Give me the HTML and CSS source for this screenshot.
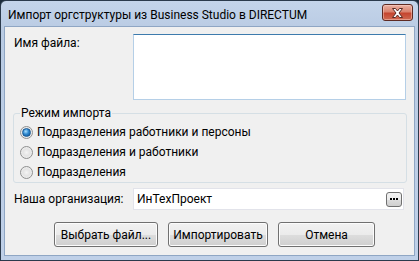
FILE: index.html
```html
<!DOCTYPE html>
<html lang="ru">
<head>
<meta charset="utf-8">
<title>Импорт оргструктуры</title>
<link rel="stylesheet" href="styles.css">
</head>
<body>
<div class="window">
  <div class="titlebar">
    <span class="title">Импорт оргструктуры из Business Studio в DIRECTUM</span>
    <div class="close">
      <svg width="13" height="10" viewBox="0 0 13 10"><path d="M1.5 0.5 H4.5 L6.5 3 L8.5 0.5 H11.5 L8 5 L11.5 9.5 H8.5 L6.5 7 L4.5 9.5 H1.5 L5 5 Z" fill="#fff" stroke="#5b2b25" stroke-width="1" stroke-linejoin="round"/></svg>
    </div>
  </div>
  <div class="client">
    <div class="file-row">
      <span class="label">Имя файла:</span>
      <div class="textarea"></div>
    </div>
    <fieldset class="group">
      <legend>Режим импорта</legend>
      <div class="radio"><span class="circle checked"></span><span>Подразделения работники и персоны</span></div>
      <div class="radio"><span class="circle"></span><span>Подразделения и работники</span></div>
      <div class="radio"><span class="circle"></span><span>Подразделения</span></div>
    </fieldset>
    <div class="org-row">
      <span class="label">Наша организация:</span>
      <div class="input">
        <span class="value">ИнТехПроект</span>
        <span class="dots"><i></i><i></i><i></i></span>
      </div>
    </div>
    <div class="buttons">
      <div class="btn btn-choose">Выбрать файл...</div>
      <div class="btn btn-import">Импортировать</div>
      <div class="btn btn-cancel">Отмена</div>
    </div>
  </div>
</div>
</body>
</html>
```

FILE: styles.css
```css
* { box-sizing: border-box; }
html, body { margin: 0; padding: 0; }
body {
  width: 419px;
  height: 261px;
  overflow: hidden;
  font-family: Roboto, "Noto Sans", sans-serif;
  font-size: 12px;
  color: #000;
  background: #1c2c3c;
}
.window {
  width: 419px;
  height: 261px;
  border: 1px solid #2b3a4c;
  border-radius: 6px 6px 0 0;
  background: linear-gradient(#c4d4ea, #b9cbe3 30px, #bfd0e8);
  display: flex;
  flex-direction: column;
  padding: 0 3px 4px 3px;
}
.titlebar {
  height: 25px;
  display: flex;
  align-items: flex-start;
  justify-content: space-between;
  padding-left: 4px;
}
.title {
  margin-top: 7px;
  font-size: 12px;
  line-height: 15px;
  color: #000;
  white-space: nowrap;
}
.close {
  width: 31px;
  height: 17px;
  margin-top: 3px;
  margin-right: 2px;
  border: 1px solid #5e2a22;
  border-radius: 3px;
  background: linear-gradient(#eab1a3, #d9826e 45%, #c5452f 55%, #cf6a52);
  display: flex;
  align-items: center;
  justify-content: center;
  box-shadow: inset 0 0 0 1px rgba(255,220,210,0.45);
}
.close svg { display: block; }
.client {
  flex: 1;
  background: #f0f0f0;
  border: 1px solid #8fa6c4;
  padding: 7px 8px 0 9px;
  display: flex;
  flex-direction: column;
}
.label {
  width: 119px;
  flex: none;
  line-height: 16px;
}
.file-row {
  display: flex;
  align-items: flex-start;
}
.file-row .label { margin-top: 1px; }
.textarea {
  width: 274px;
  height: 66px;
  background: #fff;
  border: 1px solid #b5cfe7;
  border-top-color: #3d7bad;
}
.group {
  margin: 5px 0 0 -1px;
  padding: 1px 0 0 6px;
  width: 394px;
  border: 1px solid #d5dfe5;
  border-radius: 3px;
}
.group legend {
  padding: 0 1px;
  margin-left: 0;
  line-height: 16px;
}
.radio {
  display: flex;
  align-items: center;
  height: 20px;
  line-height: 16px;
}
.circle {
  width: 13px;
  height: 13px;
  border-radius: 50%;
  border: 1px solid #8e8f8f;
  background: radial-gradient(circle at 50% 50%, #f4f4f4 0, #e3e3e3 45%, #f9f9f9 100%);
  margin-right: 4px;
  flex: none;
  display: flex;
  align-items: center;
  justify-content: center;
}
.circle.checked::after {
  content: "";
  width: 7px;
  height: 7px;
  border-radius: 50%;
  background: radial-gradient(circle at 40% 35%, #a8e0ff 0, #2f88cf 45%, #0b4f8f 100%);
  border: 1px solid #1a5a94;
}
.org-row {
  display: flex;
  align-items: center;
  margin-top: 5px;
}
.input {
  width: 271px;
  height: 22px;
  background: #fff;
  border: 1px solid #e2e3ea;
  display: flex;
  align-items: center;
  justify-content: space-between;
  padding: 0 0 0 3px;
}
.value { line-height: 16px; }
.dots {
  width: 16px;
  height: 15px;
  margin-right: 1px;
  border: 1px solid #707070;
  border-radius: 3px;
  background: linear-gradient(#f2f2f2, #ebebeb 50%, #dddddd 51%, #cfcfcf);
  display: flex;
  align-items: center;
  justify-content: center;
  gap: 1px;
}
.dots i {
  width: 2px;
  height: 2px;
  background: #000;
  display: block;
}
.buttons {
  display: flex;
  gap: 10px;
  margin-top: 12px;
  padding-left: 40px;
}
.btn {
  height: 25px;
  border: 1px solid #707070;
  border-radius: 3px;
  background: linear-gradient(#f2f2f2, #ebebeb 50%, #dddddd 51%, #cfcfcf);
  box-shadow: inset 0 0 0 1px #fcfcfc;
  display: flex;
  align-items: center;
  justify-content: center;
  line-height: 16px;
}
.btn-choose { width: 104px; }
.btn-import { width: 100px; }
.btn-cancel { width: 97px; }
```
